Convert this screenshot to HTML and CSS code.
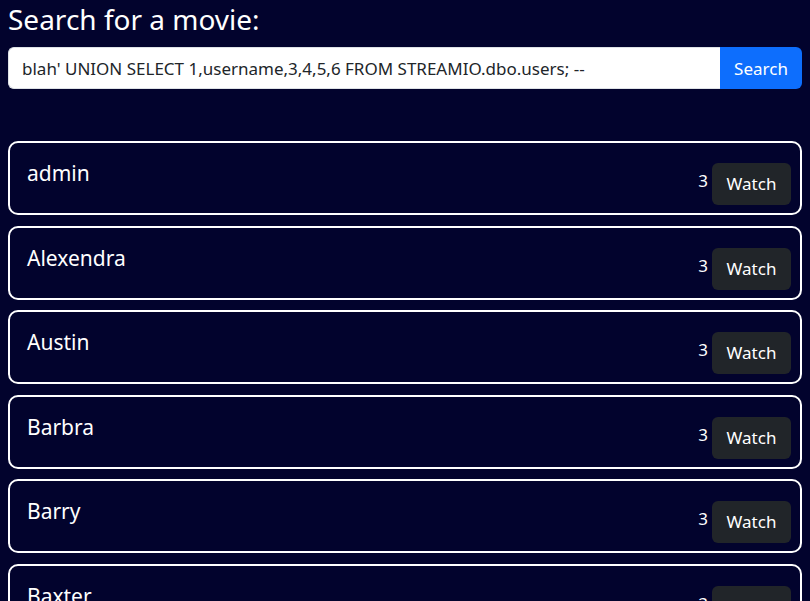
FILE: index.html
```html
<!DOCTYPE html>
<html lang="en">
  <head>
    <meta charset="UTF-8" />
    <title>Streamio - Search</title>
    <link rel="stylesheet" href="styles.css">
  </head>
  <body>
    <h1 class="title">Search for a movie:</h1>
    <form class="search" onsubmit="return false">
      <input class="search-input" type="text" value="blah' UNION SELECT 1,username,3,4,5,6 FROM STREAMIO.dbo.users; --" />
      <button class="search-btn" type="submit">Search</button>
    </form>
    <div class="results">
      <div class="movie">
        <span class="movie-name">admin</span>
        <div class="movie-side"><span class="movie-year">3</span><a href="#" class="watch">Watch</a></div>
      </div>
      <div class="movie">
        <span class="movie-name">Alexendra</span>
        <div class="movie-side"><span class="movie-year">3</span><a href="#" class="watch">Watch</a></div>
      </div>
      <div class="movie">
        <span class="movie-name">Austin</span>
        <div class="movie-side"><span class="movie-year">3</span><a href="#" class="watch">Watch</a></div>
      </div>
      <div class="movie">
        <span class="movie-name">Barbra</span>
        <div class="movie-side"><span class="movie-year">3</span><a href="#" class="watch">Watch</a></div>
      </div>
      <div class="movie">
        <span class="movie-name">Barry</span>
        <div class="movie-side"><span class="movie-year">3</span><a href="#" class="watch">Watch</a></div>
      </div>
      <div class="movie">
        <span class="movie-name">Baxter</span>
        <div class="movie-side"><span class="movie-year">3</span><a href="#" class="watch">Watch</a></div>
      </div>
    </div>
  </body>
</html>
```
FILE: styles.css
```css
* {
  margin: 0;
  padding: 0;
  box-sizing: border-box;
  text-decoration: none;
}
body {
  background-color: #02032d;
  color: #ffffff;
  font-family: "Noto Sans", "Open Sans", sans-serif;
  padding: 0 8px;
  overflow: hidden;
}
.title {
  font-size: 28px;
  font-weight: normal;
  line-height: 32px;
  padding-top: 3px;
  margin-bottom: 12px;
}
.search {
  display: flex;
  height: 42px;
  margin-bottom: 52px;
}
.search-input {
  flex: 1;
  border: 1px solid #dee2e6;
  border-right: none;
  border-radius: 6px 0 0 6px;
  padding: 0 13px;
  font-family: inherit;
  font-size: 17px;
  color: #212529;
  background-color: #ffffff;
  outline: none;
}
.search-btn {
  width: 82px;
  border: none;
  border-radius: 0 6px 6px 0;
  background-color: #0d6efd;
  color: #ffffff;
  font-family: inherit;
  font-size: 17px;
}
.movie {
  height: 74px;
  margin-bottom: 10.5px;
  border: 2px solid #ffffff;
  border-radius: 10px;
  padding: 0 9px 8px 17px;
  display: flex;
  justify-content: space-between;
}
.movie-name {
  font-size: 21px;
  line-height: 24px;
  padding-top: 18px;
}
.movie-side {
  display: flex;
  align-items: flex-end;
  gap: 4px;
}
.movie-year {
  font-size: 17px;
  line-height: 24px;
  margin-bottom: 12px;
}
.watch {
  display: block;
  height: 42px;
  width: 79px;
  line-height: 42px;
  text-align: center;
  background-color: #212529;
  color: #ffffff;
  border-radius: 6px;
  font-size: 17px;
}
```
